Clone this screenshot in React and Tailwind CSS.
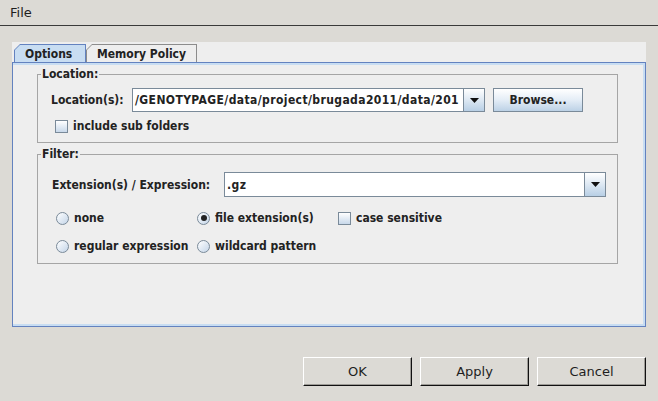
import React from 'react';

const boldText = "font-['DejaVu_Sans_Condensed','DejaVu_Sans',sans-serif] [font-stretch:condensed] font-bold text-[12px] text-[#222]";
const plainText = "font-['DejaVu_Sans',sans-serif] text-[13px] text-[#1e1e1e]";

const Arrow = () => (
  <svg width="9" height="5" viewBox="0 0 9 5">
    <path d="M0 0h9L4.5 5z" fill="#111" />
  </svg>
);

const Combo = ({ value, width, height }) => (
  <div className={`flex ${width} ${height} border border-[#7a8a99] bg-white`}>
    <div className={`flex-1 flex items-center pl-[2px] overflow-hidden whitespace-nowrap tracking-[0.4px] ${boldText}`}>
      {value}
    </div>
    <div className="w-[21px] border-l border-[#7a8a99] bg-gradient-to-b from-white via-[#dde8f3] to-[#b8cfe5] flex items-center justify-center">
      <Arrow />
    </div>
  </div>
);

const Check = () => (
  <span className="w-[13px] h-[13px] border border-[#7a8a99] bg-gradient-to-b from-white to-[#c8d8ea]" />
);

const Radio = ({ checked }) => (
  <span className="w-[13px] h-[13px] rounded-full border border-[#7a8a99] bg-gradient-to-br from-white to-[#c4d5e8] flex items-center justify-center">
    {checked && <span className="w-[6px] h-[6px] rounded-full bg-[#222]" />}
  </span>
);

const Option = ({ kind, checked, label }) => (
  <div className="flex items-center gap-[5px] h-[20px]">
    {kind === 'radio' ? <Radio checked={checked} /> : <Check />}
    <span className={boldText}>{label}</span>
  </div>
);

const Group = ({ title, className, children }) => (
  <fieldset className={`border border-[#a5a5a5] ${className}`}>
    <legend className={`ml-[3px] px-[1px] leading-[14px] ${boldText}`}>{title}</legend>
    {children}
  </fieldset>
);

const Tab = ({ label, selected, width }) => (
  <div className={`${width} h-[18px] [clip-path:polygon(6px_0,100%_0,100%_100%,0_100%,0_6px)] ${selected ? 'bg-[#6382bf]' : 'bg-[#8c8c8c]'} p-[1px] pb-0`}>
    <div className={`h-full [clip-path:polygon(5px_0,100%_0,100%_100%,0_100%,0_5px)] ${selected ? 'bg-[#c8ddf2]' : 'bg-[#eeeeee]'} flex items-center pl-[10px] ${boldText}`}>
      {label}
    </div>
  </div>
);

const DialogButton = ({ label }) => (
  <div className="w-[109px] h-[29px] border-t border-l border-white border-b border-r border-b-[#111] border-r-[#111] bg-[#dcdad5] flex items-center justify-center shadow-[inset_-1px_-1px_0_#9d9b96]">
    <span className={plainText}>{label}</span>
  </div>
);

export default function App() {
  return (
    <div className="w-[658px] h-[401px] bg-[#dcdad5] flex flex-col overflow-hidden">
      <div className="h-[26px] border-b border-[#3a3a3a] flex items-center pl-[10px]">
        <span className={plainText}>File</span>
      </div>

      <div className="mt-[16px] ml-[12px] w-[634px] bg-[#eeeeee] flex flex-col">
        <div className="h-[20px] pl-[2px] flex items-end">
          <Tab label="Options" selected width="w-[72px]" />
          <Tab label="Memory Policy" width="w-[111px]" />
        </div>

        <div className="h-[265px] border border-[#6382bf] shadow-[inset_0_2px_0_#c8ddf2,inset_-2px_-2px_0_#c8ddf2] pl-[24px] pr-[27px] pt-[4px] flex flex-col">
          <Group title="Location:" className="h-[76px]">
            <div className="pl-[13px] pt-[7px] flex flex-col">
              <div className="flex items-center">
                <span className={`w-[81px] ${boldText}`}>Location(s):</span>
                <Combo value="/GENOTYPAGE/data/project/brugada2011/data/201" width="w-[353px]" height="h-[24px]" />
                <div className="ml-[8px] w-[90px] h-[24px] border border-[#7a8a99] bg-gradient-to-b from-white via-[#e4edf6] to-[#bcd1e6] flex items-center justify-center">
                  <span className={boldText}>Browse...</span>
                </div>
              </div>
              <div className="mt-[4px] ml-[4px]">
                <Option kind="check" label="include sub folders" />
              </div>
            </div>
          </Group>

          <Group title="Filter:" className="mt-[4px] h-[117px]">
            <div className="pl-[14px] pt-[11px] flex flex-col">
              <div className="flex items-center">
                <span className={`w-[172px] ${boldText}`}>Extension(s) / Expression:</span>
                <Combo value=".gz" width="w-[382px]" height="h-[25px]" />
              </div>
              <div className="mt-[11px] ml-[4px] grid grid-cols-[141px_141px_141px] gap-y-[8px]">
                <Option kind="radio" label="none" />
                <Option kind="radio" checked label="file extension(s)" />
                <Option kind="check" label="case sensitive" />
                <Option kind="radio" label="regular expression" />
                <Option kind="radio" label="wildcard pattern" />
              </div>
            </div>
          </Group>
        </div>
      </div>

      <div className="mt-[30px] pr-[12px] flex justify-end gap-[8px]">
        <DialogButton label="OK" />
        <DialogButton label="Apply" />
        <DialogButton label="Cancel" />
      </div>
    </div>
  );
}
